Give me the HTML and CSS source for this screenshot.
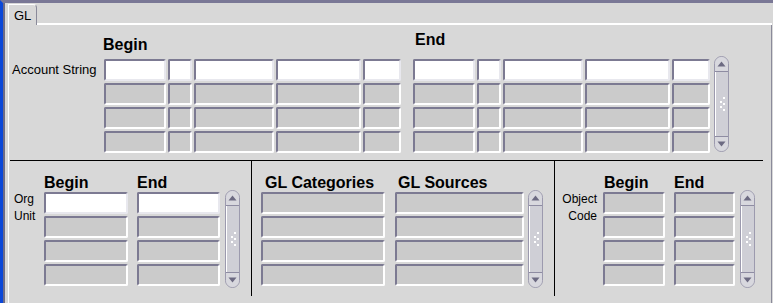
FILE: index.html
```html
<!DOCTYPE html>
<html lang="en">
<head>
  <meta charset="UTF-8">
  <title>GL Ranges</title>
  <link rel="stylesheet" href="styles.css">
</head>
<body>
<div class="window">
  <div class="inner">
    <div class="tabs">
      <div class="tab">GL</div>
      <div class="tab-fill"></div>
    </div>
    <div class="panel">

      <div class="acct">
        <div class="acct-label">Account String</div>
        <div class="group">
          <div class="head head-begin">Begin</div>
          <div class="rows">
            <div class="row">
              <div class="fld white w62"></div><div class="fld white w24"></div><div class="fld white w80"></div><div class="fld white w85"></div><div class="fld white w38"></div>
            </div>
            <div class="row">
              <div class="fld w62"></div><div class="fld w24"></div><div class="fld w80"></div><div class="fld w85"></div><div class="fld w38"></div>
            </div>
            <div class="row">
              <div class="fld w62"></div><div class="fld w24"></div><div class="fld w80"></div><div class="fld w85"></div><div class="fld w38"></div>
            </div>
            <div class="row">
              <div class="fld w62"></div><div class="fld w24"></div><div class="fld w80"></div><div class="fld w85"></div><div class="fld w38"></div>
            </div>
          </div>
        </div>
        <div class="group group-end">
          <div class="head head-end">End</div>
          <div class="rows">
            <div class="row">
              <div class="fld white w62"></div><div class="fld white w24"></div><div class="fld white w80"></div><div class="fld white w85"></div><div class="fld white w38"></div>
            </div>
            <div class="row">
              <div class="fld w62"></div><div class="fld w24"></div><div class="fld w80"></div><div class="fld w85"></div><div class="fld w38"></div>
            </div>
            <div class="row">
              <div class="fld w62"></div><div class="fld w24"></div><div class="fld w80"></div><div class="fld w85"></div><div class="fld w38"></div>
            </div>
            <div class="row">
              <div class="fld w62"></div><div class="fld w24"></div><div class="fld w80"></div><div class="fld w85"></div><div class="fld w38"></div>
            </div>
          </div>
        </div>
        <div class="sb sb-top">
          <div class="sb-btn"><svg width="9" height="6" viewBox="0 0 9 6"><path d="M0.5 5.5 L4.5 0.5 L8.5 5.5 Z" fill="#6c6a82"/></svg></div>
          <div class="sb-track"><svg width="7" height="14" viewBox="0 0 7 14"><g fill="#fff"><rect x="4" y="0" width="2" height="2"/><rect x="1" y="4" width="2" height="2"/><rect x="4" y="6" width="2" height="2"/><rect x="1" y="9" width="2" height="2"/><rect x="4" y="12" width="2" height="2"/></g></svg></div>
          <div class="sb-btn sb-down"><svg width="9" height="6" viewBox="0 0 9 6"><path d="M0.5 0.5 L8.5 0.5 L4.5 5.5 Z" fill="#6c6a82"/></svg></div>
        </div>
      </div>

      <div class="divider"></div>

      <div class="bottom">
        <div class="sect sect-org">
          <div class="side-label org-label">Org<br>Unit</div>
          <div class="group">
            <div class="heads">
              <div class="head w93">Begin</div>
              <div class="head">End</div>
            </div>
            <div class="rows">
              <div class="row gap9"><div class="fld white w84"></div><div class="fld white w83"></div></div>
              <div class="row gap9"><div class="fld w84"></div><div class="fld w83"></div></div>
              <div class="row gap9"><div class="fld w84"></div><div class="fld w83"></div></div>
              <div class="row gap9"><div class="fld w84"></div><div class="fld w83"></div></div>
            </div>
          </div>
          <div class="sb sb-bot">
            <div class="sb-btn"><svg width="9" height="6" viewBox="0 0 9 6"><path d="M0.5 5.5 L4.5 0.5 L8.5 5.5 Z" fill="#6c6a82"/></svg></div>
            <div class="sb-track"><svg width="7" height="14" viewBox="0 0 7 14"><g fill="#fff"><rect x="4" y="0" width="2" height="2"/><rect x="1" y="4" width="2" height="2"/><rect x="4" y="6" width="2" height="2"/><rect x="1" y="9" width="2" height="2"/><rect x="4" y="12" width="2" height="2"/></g></svg></div>
            <div class="sb-btn sb-down"><svg width="9" height="6" viewBox="0 0 9 6"><path d="M0.5 0.5 L8.5 0.5 L4.5 5.5 Z" fill="#6c6a82"/></svg></div>
          </div>
        </div>

        <div class="sect sect-gl">
          <div class="group">
            <div class="heads">
              <div class="head w137 indent">GL Categories</div>
              <div class="head">GL Sources</div>
            </div>
            <div class="rows">
              <div class="row gap10"><div class="fld w124"></div><div class="fld w129"></div></div>
              <div class="row gap10"><div class="fld w124"></div><div class="fld w129"></div></div>
              <div class="row gap10"><div class="fld w124"></div><div class="fld w129"></div></div>
              <div class="row gap10"><div class="fld w124"></div><div class="fld w129"></div></div>
            </div>
          </div>
          <div class="sb sb-bot">
            <div class="sb-btn"><svg width="9" height="6" viewBox="0 0 9 6"><path d="M0.5 5.5 L4.5 0.5 L8.5 5.5 Z" fill="#6c6a82"/></svg></div>
            <div class="sb-track"><svg width="7" height="14" viewBox="0 0 7 14"><g fill="#fff"><rect x="4" y="0" width="2" height="2"/><rect x="1" y="4" width="2" height="2"/><rect x="4" y="6" width="2" height="2"/><rect x="1" y="9" width="2" height="2"/><rect x="4" y="12" width="2" height="2"/></g></svg></div>
            <div class="sb-btn sb-down"><svg width="9" height="6" viewBox="0 0 9 6"><path d="M0.5 0.5 L8.5 0.5 L4.5 5.5 Z" fill="#6c6a82"/></svg></div>
          </div>
        </div>

        <div class="sect sect-obj">
          <div class="side-label obj-label">Object<br>Code</div>
          <div class="group">
            <div class="heads">
              <div class="head w71 indent1">Begin</div>
              <div class="head">End</div>
            </div>
            <div class="rows">
              <div class="row gap9"><div class="fld w62"></div><div class="fld w61"></div></div>
              <div class="row gap9"><div class="fld w62"></div><div class="fld w61"></div></div>
              <div class="row gap9"><div class="fld w62"></div><div class="fld w61"></div></div>
              <div class="row gap9"><div class="fld w62"></div><div class="fld w61"></div></div>
            </div>
          </div>
          <div class="sb sb-bot sb-obj">
            <div class="sb-btn"><svg width="9" height="6" viewBox="0 0 9 6"><path d="M0.5 5.5 L4.5 0.5 L8.5 5.5 Z" fill="#6c6a82"/></svg></div>
            <div class="sb-track"><svg width="7" height="14" viewBox="0 0 7 14"><g fill="#fff"><rect x="4" y="0" width="2" height="2"/><rect x="1" y="4" width="2" height="2"/><rect x="4" y="6" width="2" height="2"/><rect x="1" y="9" width="2" height="2"/><rect x="4" y="12" width="2" height="2"/></g></svg></div>
            <div class="sb-btn sb-down"><svg width="9" height="6" viewBox="0 0 9 6"><path d="M0.5 0.5 L8.5 0.5 L4.5 5.5 Z" fill="#6c6a82"/></svg></div>
          </div>
        </div>
      </div>

    </div>
  </div>
</div>
</body>
</html>
```

FILE: styles.css
```css
body {
  margin: 0;
  font-family: "Liberation Sans", Arial, sans-serif;
  font-size: 12px;
  color: #000;
  background: #d8d8d8;
  overflow: hidden;
}
.window {
  display: flex;
  width: 773px;
  height: 303px;
  box-sizing: border-box;
  border-top: 3px solid #7a7896;
  border-left: 3px solid #0c48d8;
}
.inner {
  flex: 1;
  display: flex;
  flex-direction: column;
  border-left: 2px solid #6e6c86;
  padding-left: 3px;
  background: #d8d8d8;
}
.tabs {
  display: flex;
  height: 22px;
}
.tab {
  width: 29px;
  margin-top: 1px;
  height: 21px;
  border-top: 1px solid #fff;
  border-left: 1px solid #fff;
  border-right: 1px solid #8a8a9a;
  border-top-right-radius: 4px;
  box-sizing: border-box;
  padding: 4px 0 0 5px;
  font-size: 13px;
  line-height: 14px;
}
.tab-fill {
  flex: 1;
  border-bottom: 2px solid #fff;
  margin-right: 1px;
}
.panel {
  flex: 1;
  border-left: 1px solid #fff;
  border-right: 1px solid #8a8a9a;
  margin-right: 1px;
  display: flex;
  flex-direction: column;
}

/* account string block */
.acct {
  display: flex;
  align-items: flex-start;
  height: 135px;
  padding-left: 3px;
}
.acct-label {
  width: 92px;
  margin-top: 34px;
  font-size: 13px;
  line-height: 22px;
}
.group {
  display: flex;
  flex-direction: column;
}
.group-end {
  margin-left: 12px;
}
.head {
  font-size: 16px;
  font-weight: bold;
  line-height: 18px;
}
.head-begin {
  height: 34px;
  box-sizing: border-box;
  padding-top: 11px;
  margin-left: -1px;
}
.head-end {
  height: 34px;
  box-sizing: border-box;
  padding: 6px 0 0 2px;
}
.rows {
  display: flex;
  flex-direction: column;
  gap: 2px;
}
.row {
  display: flex;
  gap: 2px;
}
.gap9 { gap: 9px; }
.gap10 { gap: 10px; }
.fld {
  height: 22px;
  box-sizing: border-box;
  background: #cbcbcb;
  border-top: 2px solid #7c7a92;
  border-left: 2px solid #7c7a92;
  border-right: 2px solid #fff;
  border-bottom: 2px solid #fff;
  border-radius: 2px;
}
.fld.white {
  background: #fff;
  border-right-color: #e8e8ee;
  border-bottom-color: #e8e8ee;
}
.w24 { width: 24px; }
.w38 { width: 38px; }
.w61 { width: 61px; }
.w62 { width: 62px; }
.w71 { width: 71px; }
.w80 { width: 80px; }
.w83 { width: 83px; }
.w84 { width: 84px; }
.w85 { width: 85px; }
.w93 { width: 93px; }
.w124 { width: 124px; }
.w129 { width: 129px; }
.w137 { width: 137px; }

/* scrollbars */
.sb {
  width: 15px;
  box-sizing: border-box;
  display: flex;
  flex-direction: column;
  border: 1px solid #9c9aae;
  border-radius: 8px;
  background: #cfcfd6;
  margin-left: 4px;
}
.sb-top {
  height: 96px;
  margin-top: 31px;
}
.sb-bot {
  height: 98px;
  margin-top: 29px;
}
.sb-btn {
  height: 14px;
  display: flex;
  align-items: center;
  justify-content: center;
  background: #d8d8de;
  border-bottom: 1px solid #8e8ca2;
  border-radius: 7px 7px 0 0;
}
.sb-down {
  border-bottom: none;
  border-top: 1px solid #8e8ca2;
  border-radius: 0 0 7px 7px;
}
.sb-track {
  flex: 1;
  display: flex;
  align-items: center;
  justify-content: center;
  border-left: 1px solid #fff;
}

.divider {
  height: 1px;
  background: #000;
  margin: 0 8px 0 1px;
}

/* lower blocks */
.bottom {
  display: flex;
  align-items: flex-start;
  height: 136px;
}
.sect {
  display: flex;
  align-items: flex-start;
  height: 135px;
}
.sect-org {
  width: 243px;
  padding-left: 1px;
  box-sizing: border-box;
  border-right: 1px solid #000;
}
.sect-gl {
  width: 303px;
  padding-left: 9px;
  box-sizing: border-box;
  border-right: 1px solid #000;
}
.sect-obj {
  flex: 1;
}
.heads {
  display: flex;
  height: 31px;
  padding-top: 13px;
  box-sizing: border-box;
}
.indent { padding-left: 4px; box-sizing: border-box; }
.indent1 { padding-left: 1px; box-sizing: border-box; }
.side-label {
  margin-top: 30px;
  line-height: 17px;
}
.org-label {
  width: 34px;
  padding-left: 4px;
  box-sizing: border-box;
}
.obj-label {
  width: 48px;
  padding-right: 6px;
  box-sizing: border-box;
  text-align: right;
}
.sect-org .sb { margin-left: 5px; }
.sb-obj { margin-left: 5px; }
```
